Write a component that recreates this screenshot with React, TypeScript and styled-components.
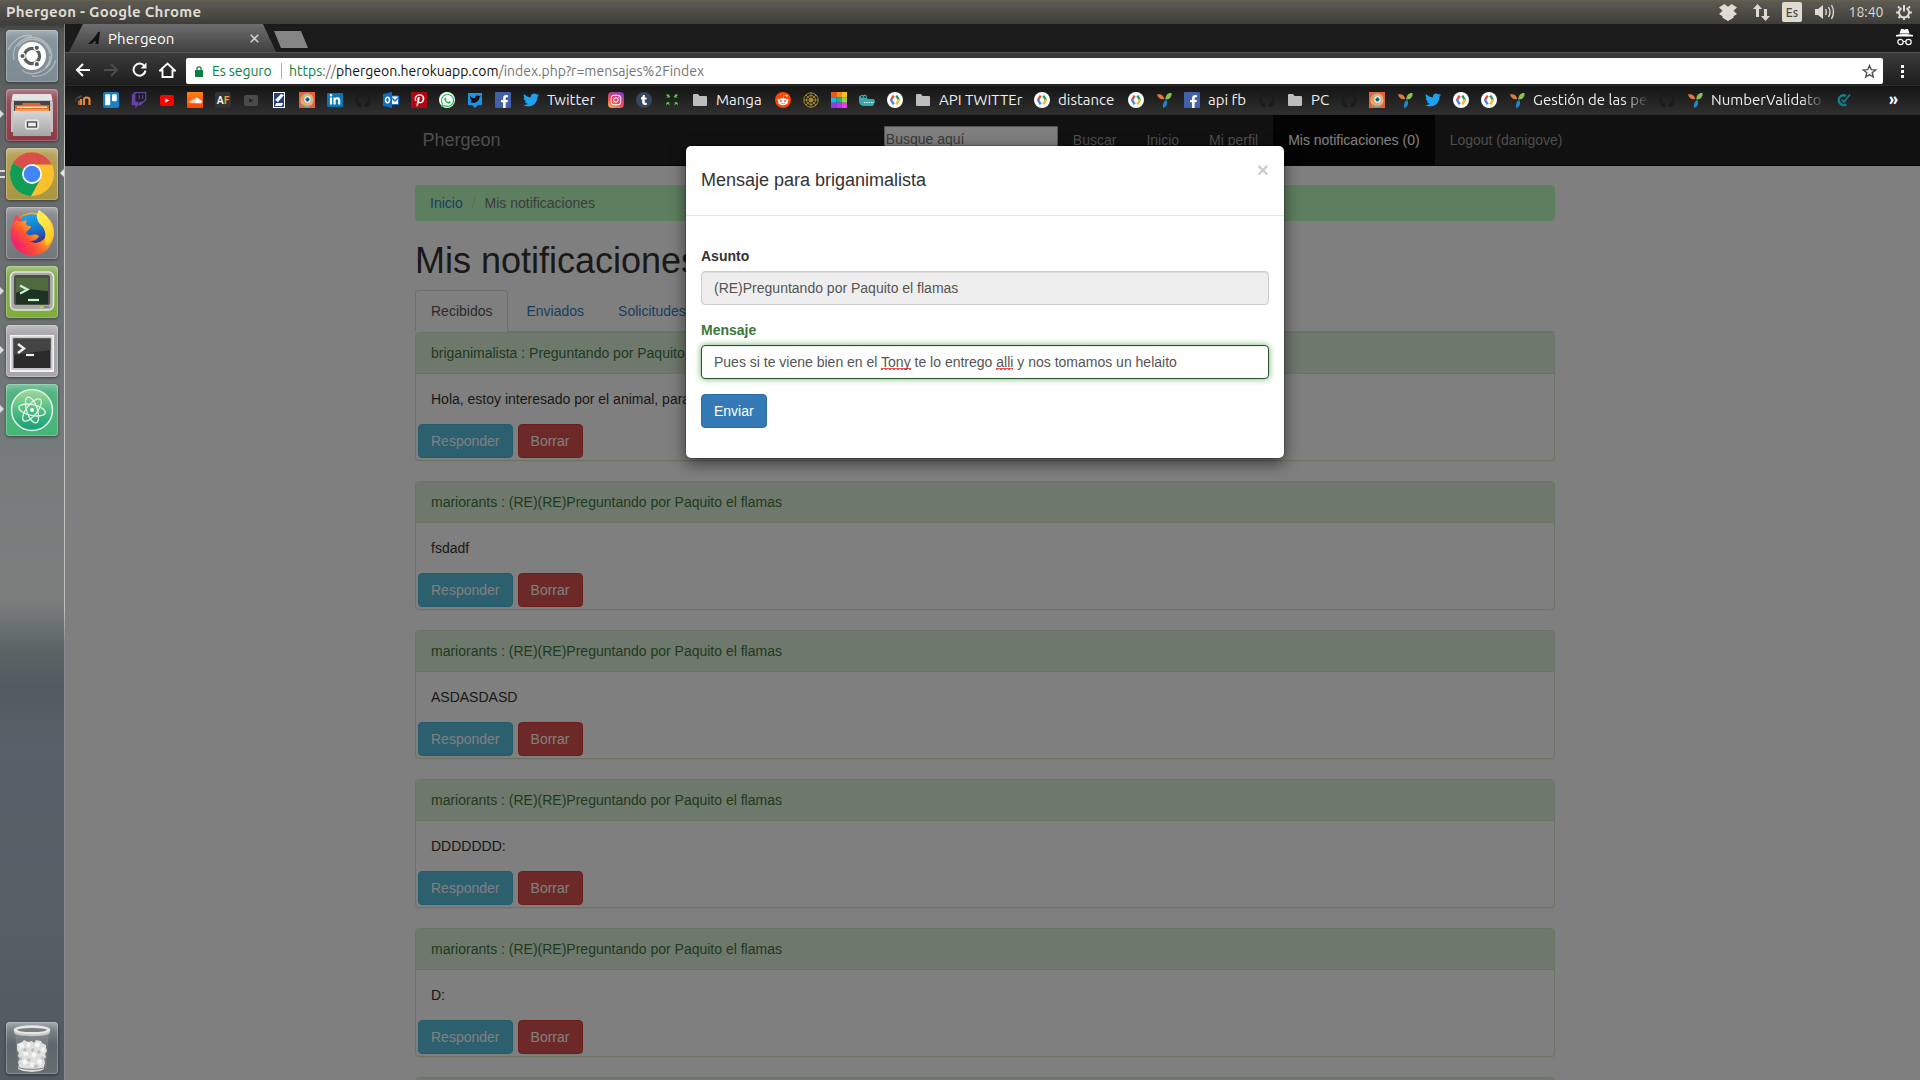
import React from 'react';
import styled, { createGlobalStyle, css } from 'styled-components';
import {
  FaTwitch, FaGithub, FaPinterestP, FaWhatsapp, FaTwitter, FaFacebookF,
  FaInstagram, FaTumblr, FaRedditAlien, FaLinkedinIn, FaSoundcloud,
} from 'react-icons/fa';

const uiFont = `'Ubuntu', 'Noto Sans', 'Open Sans', sans-serif`;
const pageFont = `'Liberation Sans', Arial, sans-serif`;

const GlobalStyle = createGlobalStyle`
  *, *::before, *::after { box-sizing: border-box; }
  body { margin: 0; overflow: hidden; background: #3c3b37; }
`;

/* ---------- desktop shell ---------- */

const Desktop = styled.div`
  width: 1920px;
  height: 1080px;
  display: grid;
  grid-template: 24px 1056px / 65px 1855px;
  overflow: hidden;
  font-family: ${uiFont};
`;

const TopBar = styled.header`
  grid-column: 1 / -1;
  display: flex;
  align-items: center;
  justify-content: space-between;
  padding: 0 8px 0 6px;
  color: #dfdbd2;
  background: linear-gradient(#66624f 0, #5b5952 2px, #3e3d39 24px);
`;

const WindowTitle = styled.span`
  font-size: 15px;
  line-height: 24px;
  font-weight: 700;
  letter-spacing: 0.25px;
  white-space: nowrap;
`;

const Indicators = styled.div`
  display: flex;
  align-items: center;
  svg { display: block; }
`;

const Slot = styled.div<{ $w: number; $end?: boolean }>`
  width: ${p => p.$w}px;
  display: flex;
  justify-content: ${p => (p.$end ? 'flex-end' : 'center')};
  align-items: center;
`;

const KeyboardBadge = styled.span`
  width: 20px;
  height: 20px;
  flex: none;
  border-radius: 2px;
  background: #dfdbd2;
  color: #4a4944;
  font-size: 12px;
  font-weight: 500;
  line-height: 21px;
  text-align: center;
`;

const Clock = styled.span`
  font-size: 14px;
  line-height: 24px;
`;

/* ---------- launcher ---------- */

const Launcher = styled.aside`
  display: flex;
  flex-direction: column;
  gap: 7px;
  padding: 6px 0 6px 6px;
  background: linear-gradient(#3c3d3b 0, #555857 8px, #5c605f 60px, #676b6c 160px, #6d7274 300px, #767b7b 430px, #7a7f7e 575px, #5b6263 630px, #525a61 665px, #596069 720px, #565e66 900px, #525960 1056px);
  border-right: 1px solid;
  border-image: linear-gradient(#7d7974 0, #c9c5bf 130px, #c4c0bb 585px, #85888f 620px, #858990 100%) 1;
`;

const Tile = styled.div<{ $bg: string; $last?: boolean }>`
  position: relative;
  width: 52px;
  height: 52px;
  flex: none;
  border-radius: 4px;
  background: ${p => p.$bg};
  box-shadow: inset 0 0 0 1px rgba(255, 255, 255, 0.22), inset 0 8px 10px -6px rgba(255, 255, 255, 0.4), 0 1px 3px rgba(0, 0, 0, 0.45);
  ${p => p.$last && css`margin-top: auto;`}
  svg { display: block; width: 52px; height: 52px; }
`;

const Pip = styled.i<{ $side?: 'right' }>`
  position: absolute;
  top: 21px;
  width: 0;
  height: 0;
  border: 4.5px solid transparent;
  ${p => p.$side === 'right'
    ? css`right: -6px; border-left: 0; border-right-color: #e4e4e2;`
    : css`left: -6px; border-right: 0; border-left-color: #d9dad8;`}
`;

const TwinPips = styled.i`
  position: absolute;
  left: -6px;
  top: 22px;
  width: 5px;
  height: 8px;
  border-top: 2px solid #d9dad8;
  border-bottom: 2px solid #d9dad8;
`;

/* ---------- browser chrome ---------- */

const Browser = styled.main`
  display: grid;
  grid-template-rows: 28px 33px 30px 965px;
  background: #1c1c1c;
  overflow: hidden;
`;

const TabStrip = styled.div`
  display: flex;
  justify-content: space-between;
  background: #1b1b1b;
`;

const TabGroup = styled.div`
  display: flex;
  padding-left: 4px;
`;

const Tab = styled.div`
  width: 210px;
  height: 28px;
  display: flex;
  align-items: center;
  padding: 0 20px 0 19px;
  color: #fff;
  font-size: 15px;
  background: linear-gradient(#6e6e6e, #404040);
  clip-path: polygon(14px 0, 194px 0, 207px 28px, 0 28px);
`;

const TabLabel = styled.span`
  flex: 1;
  margin-left: 7px;
  letter-spacing: 0.1px;
`;

const NewTab = styled.div`
  width: 34px;
  height: 17px;
  margin: 7px 0 0 -5px;
  background: #858585;
  clip-path: polygon(0 0, 27px 0, 34px 17px, 7px 17px);
`;

const Incognito = styled.div`
  padding: 5px 7px 0 0;
`;

const Toolbar = styled.div`
  display: flex;
  align-items: center;
  padding: 1px 0 0 4px;
  border-top: 1px solid #555;
  background: linear-gradient(#3b3b3b, #1d1d1d);
  svg { display: block; }
`;

const Omnibox = styled.div`
  width: 1697px;
  height: 26px;
  margin: 3px 0 0 5px;
  display: flex;
  align-items: center;
  padding: 0 6px 0 9px;
  background: #fff;
  border-radius: 2px;
  font-size: 14px;
  line-height: 26px;
  white-space: nowrap;
`;

const Secure = styled.span`
  margin-left: 9px;
  width: 61px;
  color: #0b8043;
  letter-spacing: -0.1px;
`;

const Divider = styled.i`
  width: 1px;
  height: 16px;
  margin: 0 7px 0 8px;
  background: #b0b0b0;
`;

const Url = styled.span`
  flex: 1;
  color: #747474;
  b { font-weight: 400; color: #0b8043; }
  em { font-style: normal; color: #111; }
`;

const MenuDots = styled.div`
  width: 3px;
  height: 13px;
  margin: 3px 0 0 18px;
  background: linear-gradient(#fff 3px, transparent 3px) 0 0 / 3px 5px;
`;

const Bookmarks = styled.nav`
  display: flex;
  align-items: center;
  padding-left: 4px;
  border-top: 1px solid #2c2c2c;
  border-bottom: 1px solid #292929;
  background: linear-gradient(#151515, #2f2f2f);
`;

const Bookmark = styled.div<{ $label?: number }>`
  width: ${p => 28 + (p.$label ?? 0)}px;
  flex: none;
  display: flex;
  align-items: center;
  padding-left: 6px;
`;

const BookmarkLabel = styled.span<{ $fade?: boolean }>`
  margin-left: 8px;
  flex: 1;
  color: #eee;
  font-size: 15px;
  line-height: 22px;
  white-space: nowrap;
  ${p => p.$fade && css`
    margin-right: 4px;
    mask-image: linear-gradient(90deg, #000 78%, transparent 100%);
  `}
`;

const Fav = styled.span<{ $bg?: string; $fg?: string; $round?: string; $size?: number; $h?: number }>`
  width: 16px;
  height: ${p => p.$h ?? 16}px;
  flex: none;
  display: flex;
  align-items: center;
  justify-content: center;
  background: ${p => p.$bg ?? 'transparent'};
  color: ${p => p.$fg ?? '#fff'};
  border-radius: ${p => p.$round ?? '1px'};
  font-size: ${p => p.$size ?? 12}px;
  font-weight: 700;
  svg { display: block; flex: none; }
`;

const FacebookMark = styled(FaFacebookF)`
  margin: 3px 0 0 3px;
`;

const More = styled.span`
  margin: -3px 0 0 31px;
  color: #fff;
  font-size: 16px;
  font-weight: 700;
  line-height: 20px;
`;

/* ---------- web page ---------- */

const Viewport = styled.section`
  position: relative;
  overflow: hidden;
  background: #fff;
  font: 14px/20px ${pageFont};
  color: #333;
`;

const Navbar = styled.div`
  height: 51px;
  background: #222;
  border-bottom: 1px solid #080808;
`;

const NavInner = styled.div`
  width: 1170px;
  margin: 0 auto;
  display: flex;
  justify-content: space-between;
`;

const Brand = styled.a`
  padding: 15px;
  color: #9d9d9d;
  font-size: 18px;
  line-height: 20px;
`;

const NavList = styled.div`
  display: flex;
`;

const NavItem = styled.a<{ $active?: boolean }>`
  padding: 15px;
  height: ${p => (p.$active ? 51 : 50)}px;
  color: ${p => (p.$active ? '#fff' : '#9d9d9d')};
  background: ${p => (p.$active ? '#080808' : 'transparent')};
`;

const SearchBox = styled.div`
  width: 174px;
  height: 26px;
  margin-top: 11px;
  padding: 0 1px;
  border: 1px solid #a9a9a9;
  background: #fff;
  color: #757575;
  line-height: 24px;
`;

const Container = styled.div`
  width: 1140px;
  margin: 19px 0 0 350px;
`;

const Breadcrumb = styled.div`
  height: 36px;
  padding: 8px 15px;
  margin-bottom: 20px;
  border-radius: 4px;
  background: #bcffbf;
  color: #777;
  a { color: #337ab7; }
  i { font-style: normal; color: #ccc; padding: 0 9px; }
`;

const PageTitle = styled.h1`
  margin: 0 0 10px;
  font-size: 36px;
  font-weight: 400;
  line-height: 39px;
`;

const Tabs = styled.div`
  display: flex;
  gap: 2px;
  border-bottom: 1px solid #ddd;
`;

const TabLink = styled.a<{ $active?: boolean }>`
  padding: 10px 15px;
  margin-bottom: -1px;
  border: 1px solid transparent;
  border-radius: 4px 4px 0 0;
  color: #337ab7;
  ${p => p.$active && css`
    color: #555;
    background: #fff;
    border-color: #ddd #ddd transparent;
  `}
`;

const Panel = styled.article`
  height: 129px;
  margin-bottom: 20px;
  border: 1px solid #d6e9c6;
  border-radius: 4px;
  box-shadow: 0 1px 1px rgba(0, 0, 0, 0.05);
  overflow: hidden;
`;

const PanelHeading = styled.div`
  padding: 10px 15px;
  border-bottom: 1px solid #d6e9c6;
  background: #dff0d8;
  color: #3c763d;
`;

const PanelBody = styled.div`
  padding: 15px;
`;

const PanelActions = styled.div`
  display: flex;
  gap: 5px;
  padding-left: 2px;
`;

const tones = {
  info: ['#5bc0de', '#46b8da'],
  danger: ['#d9534f', '#d43f3a'],
  primary: ['#337ab7', '#2e6da4'],
};

const Button = styled.button<{ $tone: keyof typeof tones }>`
  height: 34px;
  min-width: 65px;
  padding: 0 12px;
  border: 1px solid ${p => tones[p.$tone][1]};
  border-radius: 4px;
  background: ${p => tones[p.$tone][0]};
  color: #fff;
  font: 14px/20px ${pageFont};
`;

/* ---------- modal ---------- */

const Backdrop = styled.div`
  position: absolute;
  inset: 0;
  display: flex;
  justify-content: center;
  align-items: flex-start;
  padding: 30px 15px 0 0;
  background: rgba(0, 0, 0, 0.5);
`;

const Dialog = styled.div`
  width: 600px;
  border: 1px solid rgba(0, 0, 0, 0.2);
  border-radius: 6px;
  background: #fff;
  background-clip: padding-box;
  box-shadow: 0 5px 15px rgba(0, 0, 0, 0.5);
`;

const DialogHeader = styled.div`
  height: 70px;
  display: flex;
  justify-content: space-between;
  padding: 15px;
  border-bottom: 1px solid #e5e5e5;
`;

const DialogTitle = styled.h4`
  margin: 10px 0 0;
  font-size: 18px;
  font-weight: 400;
  line-height: 19.8px;
`;

const Close = styled.span`
  margin-top: -2px;
  color: #000;
  opacity: 0.2;
  font-size: 21px;
  font-weight: 700;
  line-height: 21px;
`;

const DialogBody = styled.div`
  padding: 30px 15px;
`;

const Label = styled.div<{ $valid?: boolean }>`
  margin-bottom: 5px;
  font-weight: 700;
  color: ${p => (p.$valid ? '#3c763d' : '#333')};
`;

const Field = styled.div<{ $disabled?: boolean }>`
  height: 34px;
  margin-bottom: 15px;
  padding: 6px 12px;
  border: 1px solid ${p => (p.$disabled ? '#ccc' : '#2b542c')};
  border-radius: 4px;
  background: ${p => (p.$disabled ? '#eee' : '#fff')};
  color: #555;
  box-shadow: inset 0 1px 1px rgba(0, 0, 0, 0.075)${p => (p.$disabled ? '' : ', 0 0 6px #67b168')};
`;

const Misspelled = styled.span`
  background: radial-gradient(circle at 1px 1px, #f44 0.7px, transparent 1.1px) 0 100% / 4px 2px repeat-x,
    radial-gradient(circle at 3px 0, #f44 0.7px, transparent 1.1px) 0 100% / 4px 2px repeat-x;
`;

/* ---------- drawings ---------- */

const DropboxIcon = () => (
  <svg width="18" height="17" viewBox="0 0 18 17" fill="#dfdbd2">
    <path d="M5.300 0L9 2.800 12.700 0 18 3.500 14.500 6.800 18 10l-3.500 2.300v1.400L9 17l-5.500-3.300v-1.400L0 10l3.500-3.200L0 3.500z" />
  </svg>
);

const UbuntuLogo = () => (
  <svg viewBox="0 0 52 52">
    <g fill="none" stroke="#fff" strokeOpacity=".35" strokeWidth="1.4">
      <path d="M8 30C4 12 24 2 36 10s12 20 4 28" />
      <path d="M16 40c10 8 28 2 28-14M12 16C20 6 40 6 44 24" />
      <path d="M2 20C8 8 18 4 26 6M50 30c-4 12-14 18-24 16" />
    </g>
    <circle cx="26" cy="26" r="14" fill="#fff" />
    <circle cx="26" cy="26" r="7.6" fill="none" stroke="#565b5e" strokeWidth="3.2" />
    <g fill="#565b5e" stroke="#fff" strokeWidth="1.2">
      <circle cx="16.500" cy="26" r="2.700" /><circle cx="30.800" cy="17.800" r="2.700" /><circle cx="30.800" cy="34.200" r="2.700" />
    </g>
  </svg>
);

const FilesIcon = () => (
  <svg viewBox="0 0 52 52">
    <defs><linearGradient id="cab" x1="0" y1="0" x2="0" y2="1"><stop stopColor="#d6d6d6" /><stop offset="1" stopColor="#a6a6a6" /></linearGradient></defs>
    <path d="M7 5h38l2 9v29H5V14z" fill="#c4c4c4" />
    <path d="M7 5h38l1.500 6h-41z" fill="#e4e4e4" />
    <path d="M8 12h36v14H8z" fill="#444" />
    <path d="M9 16h7l1-2h17l1 2h8v7H9z" fill="#d8692c" />
    <path d="M11 17.500h30v1.500H11z" fill="#f7e6cf" /><path d="M9 20h34v2H9z" fill="#f09a52" />
    <path d="M7 22h38v25H7z" fill="url(#cab)" />
    <rect x="19.500" y="31" width="13" height="9" rx="1.500" fill="#ddd" stroke="#eee" />
    <rect x="21.500" y="33" width="9" height="5" fill="#eee" stroke="#444" strokeWidth="1.300" />
  </svg>
);

const ChromeIcon = () => (
  <svg viewBox="0 0 52 52">
    <circle cx="26" cy="26" r="22" fill="#fbc12d" />
    <path d="M26 26 L6.950 15 A22 22 0 0 1 45 15.200 L46 16.500 H26z" fill="#d9504a" />
    <path d="M26 26 L6.950 15 A22 22 0 0 0 25 48 L34.500 31z" fill="#109d58" />
    <circle cx="26" cy="26" r="10" fill="#fff" />
    <circle cx="26" cy="26" r="8.300" fill="#4285f4" />
  </svg>
);

const FirefoxIcon = () => (
  <svg viewBox="0 0 52 52">
    <defs>
      <linearGradient id="ffRing" x1="1" y1=".1" x2=".1" y2=".8"><stop stopColor="#ffe030" /><stop offset=".4" stopColor="#ff9a1f" /><stop offset=".7" stopColor="#ff4f36" /><stop offset="1" stopColor="#f0226c" /></linearGradient>
      <linearGradient id="ffTail" x1=".3" y1="0" x2=".8" y2="1"><stop stopColor="#fff25a" /><stop offset="1" stopColor="#ffc21c" /></linearGradient>
      <linearGradient id="ffGlobe" x1=".4" y1="0" x2=".6" y2="1"><stop stopColor="#18a8ea" /><stop offset=".5" stopColor="#1478cf" /><stop offset="1" stopColor="#3a2c8c" /></linearGradient>
    </defs>
    <circle cx="26" cy="27" r="21.500" fill="url(#ffRing)" />
    <path d="M10 8l6 5-9 10q-1-9 3-15z" fill="#f8415a" />
    <path d="M15 11C21 6 31 6 36 11L41 26C40 34 30 38 24 35L18 24z" fill="url(#ffGlobe)" />
    <path d="M33 3C29 9 31 14 35 18 39 22 41 28 38 33L35 39C42 40 48 34 48 26 48 14 40 8 33 3z" fill="url(#ffTail)" />
    <path d="M6 20L10 13 14 15 21 13C19 17 20 19 25 19 25 22 21 23 20 26 21 28 23 29 26 28 29 27 32 28 33 29 31 33 28 34 24 34 30 38 36 36 39 31L40 39 10 41z" fill="url(#ffRing)" />
  </svg>
);

const TerminatorIcon = () => (
  <svg viewBox="0 0 52 52">
    <rect x="4.500" y="6" width="43" height="38" rx="5" fill="#a9a9a6" stroke="#e6e6e2" strokeWidth="1.500" />
    <rect x="8" y="9" width="36" height="30" rx="2" fill="#4b4f48" />
    <rect x="10" y="12" width="32" height="26" fill="#1d3222" />
    <path d="M10 12h32v13c-12 0-20-5-32 2z" fill="#66804e" opacity=".7" />
    <path d="M14 19.500l7.500 4-7.500 4" fill="none" stroke="#c8f3d0" strokeWidth="2.200" />
    <path d="M22 34h11" stroke="#c8f3d0" strokeWidth="2.200" />
    <path d="M34 41h3" stroke="#9be04a" strokeWidth="2" /><path d="M38 41h5" stroke="#888" strokeWidth="2" />
  </svg>
);

const TerminalIcon = () => (
  <svg viewBox="0 0 52 52">
    <path d="M4 10h44v37H4z" fill="#f2f2f2" /><path d="M5.500 11.500h41V45h-41z" fill="#c8c8c8" />
    <path d="M7.500 13.500h37V43h-37z" fill="#2b2b2b" />
    <path d="M7.500 13.500h37V25l-37 5z" fill="#444" />
    <path d="M12 19l6 4.500-6 4.500" fill="none" stroke="#eee" strokeWidth="2.400" /><path d="M20 30h8" stroke="#eee" strokeWidth="2.200" />
  </svg>
);

const AtomIcon = () => (
  <svg viewBox="0 0 52 52">
    <defs><linearGradient id="atom" x1="0" y1="0" x2="0" y2="1"><stop stopColor="#a5d89a" /><stop offset=".5" stopColor="#4fbe83" /><stop offset="1" stopColor="#149e78" /></linearGradient></defs>
    <circle cx="26" cy="26" r="20.500" fill="url(#atom)" stroke="#e4eee6" strokeWidth="1.600" />
    <g fill="none" stroke="#e4f4e6" strokeWidth="1.300">
      <ellipse cx="26" cy="26" rx="13.500" ry="5.400" transform="rotate(12 26 26)" />
      <ellipse cx="26" cy="26" rx="13.500" ry="5.400" transform="rotate(72 26 26)" />
      <ellipse cx="26" cy="26" rx="13.500" ry="5.400" transform="rotate(128 26 26)" />
    </g>
    <circle cx="26" cy="26" r="1.900" fill="#fff" />
  </svg>
);

const TrashIcon = () => (
  <svg viewBox="0 0 52 52">
    <path d="M9 10l3 36c5 3 23 3 28 0l3-36z" fill="#fff" opacity=".13" />
    <path d="M11 22l5-2 2-2 4 2 4-1 2 2 2-3 5 1 1 2 4 2v3l1 3-2 3 1 3-2 2 1 4-1 3 0 3-4 2-8 1-9-1-5-2 1-4-1-3 2-3-2-3 1-3-2-3z" fill="#dededb" />
    <g fill="#f6f6f4">
      <path d="M13 22l4-1 1 4-4 2zM22 20l3 2-2 4-3-2zM30 20l4 1-1 4-4-1zM36 25l3 1-1 4-3-1zM17 30l4-1 2 4-5 1zM28 30l3 3-3 3-3-3zM16 39l3-2 3 4-4 2zM32 37l4 1-1 5-4-2zM25 40l3 1-1 4-3-1z" />
    </g>
    <g fill="#bcbebb">
      <path d="M18 26l3 1-1 3-3-1zM25 27l3-1 0 3-2 1zM32 28l3 2-2 2-2-2zM22 36l3 1-2 3-2-2zM13 35l3 0 0 3-2 0zM36 34l2 1-1 3-2-1zM28 44l3-2 1 3-3 1z" />
    </g>
    <path d="M13 45.500c5 2.500 21 2.500 26 0" stroke="#4c5257" fill="none" opacity=".7" />
    <ellipse cx="26" cy="8" rx="17" ry="3.400" fill="#777d80" stroke="#e6e6e3" strokeWidth="2.600" />
    <path d="M8 8.500c2 5 34 5 36 0l-.5 3c-3 3.500-32 3.500-35 0z" fill="#c9c9c5" />
  </svg>
);

const Pigeon = () => (
  <svg width="13" height="14" viewBox="0 0 13 14">
    <path d="M12 1c-1.500-.5-2.500.4-3 2L5 8 1.500 11.500 0 13h3.500L7 9.500l1 2.500-1 1h3.500l.5-5z" fill="#111" />
  </svg>
);

const Folder = () => (
  <svg width="14" height="12" viewBox="0 0 14 12"><path d="M0 1Q0 0 1 0h4l1.500 2H13q1 0 1 1v8q0 1-1 1H1q-1 0-1-1z" fill="#bdbdbd" /></svg>
);

const Yii = () => (
  <svg width="15" height="16" viewBox="0 0 15 16">
    <path d="M0 2.500C3 1.500 6.500 2.500 7.300 7 4 8 1 6 0 2.500z" fill="#e87a35" />
    <path d="M14.500 1C11 .5 8.500 3 8.300 7.500 13 8 15 4 14.500 1z" fill="#8bc34a" />
    <path d="M6 16c-.5-4 .5-7 3.500-8C11 12 9.500 15 6 16z" fill="#1f86c9" />
  </svg>
);

const GDev = () => (
  <svg width="16" height="16" viewBox="0 0 16 16">
    <circle cx="8" cy="8" r="8" fill="#fff" />
    <g fill="none" strokeWidth="2.300">
      <path d="M6.700 3.600L4 8" stroke="#e8453c" /><path d="M3.700 7.400l3 5" stroke="#4285f4" />
      <path d="M9.300 3.600L12 8" stroke="#0f9d58" /><path d="M12.300 7.400l-3 5" stroke="#f9bb2d" />
    </g>
  </svg>
);

const EyeIcon = () => (
  <svg width="16" height="16" viewBox="0 0 16 16">
    <path d="M0 0h16v16H0z" fill="#e9603b" /><circle cx="8" cy="8" r="6.600" fill="#d8b48c" />
    <path d="M2 6c2-4 6-5 9-4M3 12c3 3 7 2 9 1" stroke="#79b3a1" strokeWidth="1.300" fill="none" />
    <path d="M1.500 5.500c4-1 9-2 12 2-3 5-8 5-11 1z" fill="#f19a4b" />
    <circle cx="8.500" cy="7.500" r="3.200" fill="#fff" /><circle cx="8.500" cy="7.500" r="2.200" fill="#2d8fb0" /><circle cx="8.500" cy="7.500" r="1.200" fill="#153b52" />
  </svg>
);

const Moodle = () => (
  <svg width="16" height="12" viewBox="0 0 16 12">
    <path d="M0 4.500L5.500 1l2 1.500-3 2z" fill="#4c4440" /><path d="M.8 5v3" stroke="#555" strokeWidth=".8" />
    <path d="M4 11V6.500" stroke="#a86634" strokeWidth="2" fill="none" />
    <path d="M9 11V5.600Q9 3.500 11.700 3.500t2.800 2.400V11M6 5v6" stroke="#e88434" strokeWidth="2.200" fill="none" />
  </svg>
);

const Trello = () => (
  <svg width="16" height="16" viewBox="0 0 16 16"><rect width="16" height="16" rx="2" fill="#1681c8" /><rect x="2.200" y="2.200" width="5" height="11" rx="1" fill="#fff" /><rect x="9" y="2.200" width="4.800" height="7" rx="1" fill="#fff" /></svg>
);

const Play = ({ bg, fg }: { bg: string; fg: string }) => (
  <svg width="14" height="11" viewBox="0 0 14 11"><rect width="14" height="11" rx="2" fill={bg} /><path d="M5.200 3.200v4.600l4-2.300z" fill={fg} /></svg>
);

const DocIcon = () => (
  <svg width="12" height="16" viewBox="0 0 12 16"><path d="M0 0h12v16H0z" fill="#fff" /><path d="M1 1h10v14H1z" fill="#243e84" /><path d="M2 8l6-6 3 1-6 7zM2 14l1-3h7l-1 3z" fill="#fff" /></svg>
);

const Outlook = () => (
  <svg width="16" height="16" viewBox="0 0 16 16"><path d="M8 4h7.500v8.500H8z" fill="#fff" stroke="#1a73c8" /><path d="M9 6l3 3 4-4" stroke="#1a73c8" strokeWidth="1.500" fill="none" /><path d="M0 2l9-2v16l-9-2z" fill="#0f6cbf" /><ellipse cx="4.500" cy="8" rx="2" ry="2.700" fill="none" stroke="#fff" strokeWidth="1.500" /></svg>
);

const TwitterBubble = () => (
  <svg width="16" height="16" viewBox="0 0 16 16"><path d="M1 1h14v12h-4l-3 3-3-3H1z" fill="#1c94e6" /><path d="M3 4c2 2 3 2 5 2 0-3 3-3 4-2l2-.5-1.500 2C12 10 7 12 3 10l2-1C3.500 8 3 6 3 4z" fill="#111" /></svg>
);

const Clover = () => (
  <svg width="14" height="14" viewBox="0 0 14 14" fill="#69d84f" stroke="#0a0a0a" strokeWidth=".5">
    <path d="M.5 1.500L4 1l1.500 3.500L2 5 .5 4h2zM13.500 1.500L10 1 8.500 4.500 12 5l1.500-1h-2z" />
    <path d="M1 13V9.500L4 8.500l1 4.500H4l-1-2zM13 13V9.500l-3-1L9 13h1l1-2z" />
  </svg>
);

const GoldWheel = () => (
  <svg width="16" height="16" viewBox="0 0 16 16" fill="none" stroke="#a88a2c">
    <circle cx="8" cy="8" r="7.200" /><circle cx="8" cy="8" r="4.500" /><circle cx="8" cy="8" r="1.500" fill="#d4ae38" />
    <path d="M8 1v14M1 8h14M3 3l10 10M13 3L3 13" strokeWidth=".9" />
  </svg>
);

const swatches = ['#f4511e', '#ff8a1f', '#ffc21f', '#18b9e8', '#12b981', '#8bd84a', '#8f3cf0', '#c830f0', '#ef38f4'];
const Swatches = () => (
  <svg width="16" height="16" viewBox="0 0 3 3">{swatches.map((c, i) => <rect key={c} x={i % 3} y={Math.floor(i / 3)} width="1.020" height="1.020" fill={c} />)}</svg>
);

const Croc = () => (
  <svg width="16" height="13" viewBox="0 0 16 13">
    <path d="M0 3Q0 1 2 1.500 3 0 4.500 1.300 6-.2 7.500 1.500L8.500 5H14q2 0 2 2.500L14 12H4Q0 11 0 7z" fill="#3aa9ab" />
    <circle cx="3" cy="3" r=".9" fill="#123" /><circle cx="6" cy="3" r=".9" fill="#123" /><path d="M5 8.500h10" stroke="#e8ffff" strokeWidth="1.200" strokeDasharray="1 .7" />
  </svg>
);

const TealCheck = () => (
  <svg width="14" height="14" viewBox="0 0 14 14" fill="none" stroke="#12808c"><path d="M9 3C5.500 1 1.500 3.500 1.800 7.500S6.500 13 9.500 11.500" strokeWidth="2.400" /><path d="M4.500 6.500L7 9l6-7.500" strokeWidth="1.700" /></svg>
);

const Github = () => <Fav $fg="#1b1b1b" $size={16}><FaGithub /></Fav>;
const Facebook = () => <Fav $bg="#4460a8" $size={13}><FacebookMark /></Fav>;

const Amber = styled.span`
  color: #f6a52c;
`;

/* ---------- content ---------- */

type Mark = { icon: React.ReactNode; text?: string; w?: number; fade?: boolean };

const marks: Mark[] = [
  { icon: <Fav><Moodle /></Fav> },
  { icon: <Fav><Trello /></Fav> },
  { icon: <Fav $fg="#6441a5" $size={16}><FaTwitch /></Fav> },
  { icon: <Fav><Play bg="#f00" fg="#fff" /></Fav> },
  { icon: <Fav $bg="linear-gradient(#ff8010,#ff4208)" $size={13}><FaSoundcloud /></Fav> },
  { icon: <Fav $bg="#333" $round="3px" $size={10}><span>A</span><Amber>F</Amber></Fav> },
  { icon: <Fav><Play bg="#4a4a4a" fg="#222" /></Fav> },
  { icon: <Fav><DocIcon /></Fav> },
  { icon: <Fav><EyeIcon /></Fav> },
  { icon: <Fav $bg="#0a76b4" $size={12} $h={14}><FaLinkedinIn /></Fav> },
  { icon: <Github /> },
  { icon: <Fav><Outlook /></Fav> },
  { icon: <Fav $bg="#b5040f" $size={13}><FaPinterestP /></Fav> },
  { icon: <Fav $bg="#fff" $fg="#15bd4d" $round="8px" $size={15}><FaWhatsapp /></Fav> },
  { icon: <Fav><TwitterBubble /></Fav> },
  { icon: <Facebook /> },
  { icon: <Fav $fg="#1da1f2" $size={16}><FaTwitter /></Fav>, text: 'Twitter', w: 57 },
  { icon: <Fav $bg="linear-gradient(30deg,#fdc04a,#e8405f 45%,#7a3fd0)" $round="4px" $size={12}><FaInstagram /></Fav> },
  { icon: <Fav $bg="#36465d" $round="8px" $size={10}><FaTumblr /></Fav> },
  { icon: <Fav><Clover /></Fav> },
  { icon: <Fav><Folder /></Fav>, text: 'Manga', w: 55 },
  { icon: <Fav $bg="#ff4500" $round="8px" $size={12}><FaRedditAlien /></Fav> },
  { icon: <Fav><GoldWheel /></Fav> },
  { icon: <Fav><Swatches /></Fav> },
  { icon: <Fav><Croc /></Fav> },
  { icon: <Fav><GDev /></Fav> },
  { icon: <Fav><Folder /></Fav>, text: 'API TWITTEr', w: 91 },
  { icon: <Fav><GDev /></Fav>, text: 'distance', w: 66 },
  { icon: <Fav><GDev /></Fav> },
  { icon: <Fav><Yii /></Fav> },
  { icon: <Facebook />, text: 'api fb', w: 47 },
  { icon: <Github /> },
  { icon: <Fav><Folder /></Fav>, text: 'PC', w: 26 },
  { icon: <Github /> },
  { icon: <Fav><EyeIcon /></Fav> },
  { icon: <Fav><Yii /></Fav> },
  { icon: <Fav $fg="#1da1f2" $size={16}><FaTwitter /></Fav> },
  { icon: <Fav><GDev /></Fav> },
  { icon: <Fav><GDev /></Fav> },
  { icon: <Fav><Yii /></Fav>, text: 'Gestión de las pe', w: 122, fade: true },
  { icon: <Github /> },
  { icon: <Fav><Yii /></Fav>, text: 'NumberValidato', w: 121, fade: true },
  { icon: <Fav><TealCheck /></Fav> },
];

const subject = '(RE)(RE)Preguntando por Paquito el flamas';
const messages = [
  { title: 'briganimalista : Preguntando por Paquito', body: 'Hola, estoy interesado por el animal, para' },
  { title: `mariorants : ${subject}`, body: 'fsdadf' },
  { title: `mariorants : ${subject}`, body: 'ASDASDASD' },
  { title: `mariorants : ${subject}`, body: 'DDDDDDD:' },
  { title: `mariorants : ${subject}`, body: 'D:' },
];

const navIcon = { fill: 'none', stroke: '#fff', strokeWidth: 2 };

export default function App() {
  return (
    <Desktop>
      <GlobalStyle />
      <TopBar>
        <WindowTitle>Phergeon - Google Chrome</WindowTitle>
        <Indicators>
          <Slot $w={26}><DropboxIcon /></Slot>
          <Slot $w={41}>
            <svg width="17" height="17" viewBox="0 0 17 17" fill="#dfdbd2"><path d="M4.500 0L0 5h3v8h3V5h3zM12.500 17L8 12h3V5h3v7h3z" /></svg>
          </Slot>
          <Slot $w={20}><KeyboardBadge>Es</KeyboardBadge></Slot>
          <Slot $w={46}>
            <svg width="20" height="16" viewBox="0 0 20 16"><path d="M0 5h3l5-4v14l-5-4H0z" fill="#dfdbd2" /><path d="M10.500 5q1.500 3 0 6M13.500 3q3 5 0 10M16.500 1q4 7 0 14" fill="none" stroke="#dfdbd2" strokeWidth="1.400" /></svg>
          </Slot>
          <Slot $w={36}><Clock>18:40</Clock></Slot>
          <Slot $w={28} $end>
            <svg width="16" height="16" viewBox="0 0 16 16" fill="none" stroke="#dfdbd2"><path d="M5.500 4.200a5 5 0 1 0 5 0" strokeWidth="2" /><path d="M8 1v6.500" strokeWidth="2" /><path d="M3.800 4.200L2 2.500M12.200 4.200L14 2.500M3 8.500H0M13 8.500h3M4.500 12l-2 2M11.500 12l2 2M8 13.500V16" strokeWidth="2" /></svg>
          </Slot>
        </Indicators>
      </TopBar>

      <Launcher>
        <Tile $bg="linear-gradient(#8b979e,#7d8a92)"><UbuntuLogo /></Tile>
        <Tile $bg="linear-gradient(#9a5560,#8c3945)"><Pip /><FilesIcon /></Tile>
        <Tile $bg="linear-gradient(#b5a259,#ab963e)"><TwinPips /><ChromeIcon /><Pip $side="right" /></Tile>
        <Tile $bg="linear-gradient(#8a8c90,#73767a)"><FirefoxIcon /></Tile>
        <Tile $bg="linear-gradient(#88b154,#7cad39)"><Pip /><TerminatorIcon /></Tile>
        <Tile $bg="linear-gradient(#a9a9ab,#a8a8aa)"><Pip /><TerminalIcon /></Tile>
        <Tile $bg="linear-gradient(#52b383,#46b577)"><Pip /><AtomIcon /></Tile>
        <Tile $bg="linear-gradient(#878d91,#5d666b 45%,#656f71)" $last><TrashIcon /></Tile>
      </Launcher>

      <Browser>
        <TabStrip>
          <TabGroup>
            <Tab>
              <Pigeon />
              <TabLabel>Phergeon</TabLabel>
              <svg width="9" height="9" viewBox="0 0 9 9"><path d="M.7.700l7.600 7.600M8.300.700L.7 8.300" stroke="#ccc" strokeWidth="1.600" /></svg>
            </Tab>
            <NewTab />
          </TabGroup>
          <Incognito>
            <svg width="17" height="17" viewBox="0 0 17 17"><path d="M5 0h2l1.500.8L10 0h2l1.500 4.500h-10zM0 6q8.500-2 17 0v1.500H0z" fill="#fff" /><circle cx="4.500" cy="13" r="2.700" fill="none" stroke="#fff" strokeWidth="1.200" /><circle cx="12.500" cy="13" r="2.700" fill="none" stroke="#fff" strokeWidth="1.200" /><path d="M7 12.500h3" stroke="#fff" /></svg>
          </Incognito>
        </TabStrip>

        <Toolbar>
          <Slot $w={28}><svg width="16" height="14" viewBox="0 0 16 14" {...navIcon}><path d="M15 7H2.500M8 1L2 7l6 6" /></svg></Slot>
          <Slot $w={28}><svg width="16" height="14" viewBox="0 0 16 14" {...navIcon} stroke="#4d4d4d"><path d="M1 7h12.500M8 1l6 6-6 6" /></svg></Slot>
          <Slot $w={28}><svg width="15" height="15" viewBox="0 0 15 15" {...navIcon}><path d="M12.500 4.200A6 6 0 1 0 13.500 8.500" /><path d="M14.500.5v6h-6z" fill="#fff" stroke="none" /></svg></Slot>
          <Slot $w={28}><svg width="17" height="16" viewBox="0 0 17 16" {...navIcon}><path d="M1 8.500L8.500 1.500 16 8.500h-2.500V15h-10V8.500z" strokeWidth="1.900" /></svg></Slot>
          <Omnibox>
            <svg width="8" height="11" viewBox="0 0 8 11"><path d="M0 4h8v7H0z" fill="#0b8043" /><path d="M2 4V2.500q0-1.700 2-1.700t2 1.700V4" fill="none" stroke="#0b8043" strokeWidth="1.300" /></svg>
            <Secure>Es seguro</Secure>
            <Divider />
            <Url><b>https</b>://<em>phergeon.herokuapp.com</em>/index.php?r=mensajes%2Findex</Url>
            <svg width="15" height="15" viewBox="0 0 15 15"><path d="M7.500 1.500l1.700 4.100 4.400.3-3.400 2.800 1.100 4.300-3.800-2.400L3.700 13l1.100-4.300L1.400 5.900l4.400-.3z" fill="none" stroke="#555" strokeWidth="1.400" /></svg>
          </Omnibox>
          <MenuDots />
        </Toolbar>

        <Bookmarks>
          {marks.map((m, i) => (
            <Bookmark key={i} $label={m.w}>
              {m.icon}
              {m.text && <BookmarkLabel $fade={m.fade}>{m.text}</BookmarkLabel>}
            </Bookmark>
          ))}
          <More>»</More>
        </Bookmarks>

        <Viewport>
          <Navbar>
            <NavInner>
              <Brand>Phergeon</Brand>
              <NavList>
                <SearchBox>Busque aquí</SearchBox>
                <NavItem>Buscar</NavItem>
                <NavItem>Inicio</NavItem>
                <NavItem>Mi perfil</NavItem>
                <NavItem $active>Mis notificaciones (0)</NavItem>
                <NavItem>Logout (danigove)</NavItem>
              </NavList>
            </NavInner>
          </Navbar>

          <Container>
            <Breadcrumb><a>Inicio</a><i>/</i>Mis notificaciones</Breadcrumb>
            <PageTitle>Mis notificaciones</PageTitle>
            <Tabs>
              <TabLink $active>Recibidos</TabLink>
              <TabLink>Enviados</TabLink>
              <TabLink>Solicitudes</TabLink>
            </Tabs>
            {messages.map((m, i) => (
              <Panel key={i}>
                <PanelHeading>{m.title}</PanelHeading>
                <PanelBody>{m.body}</PanelBody>
                <PanelActions>
                  <Button $tone="info">Responder</Button>
                  <Button $tone="danger">Borrar</Button>
                </PanelActions>
              </Panel>
            ))}
            <Panel><PanelHeading /></Panel>
          </Container>

          <Backdrop>
            <Dialog>
              <DialogHeader>
                <DialogTitle>Mensaje para briganimalista</DialogTitle>
                <Close>×</Close>
              </DialogHeader>
              <DialogBody>
                <Label>Asunto</Label>
                <Field $disabled>(RE)Preguntando por Paquito el flamas</Field>
                <Label $valid>Mensaje</Label>
                <Field>
                  Pues si te viene bien en el <Misspelled>Tony</Misspelled> te lo entrego <Misspelled>alli</Misspelled> y nos tomamos un helaito
                </Field>
                <Button $tone="primary">Enviar</Button>
              </DialogBody>
            </Dialog>
          </Backdrop>
        </Viewport>
      </Browser>
    </Desktop>
  );
}
